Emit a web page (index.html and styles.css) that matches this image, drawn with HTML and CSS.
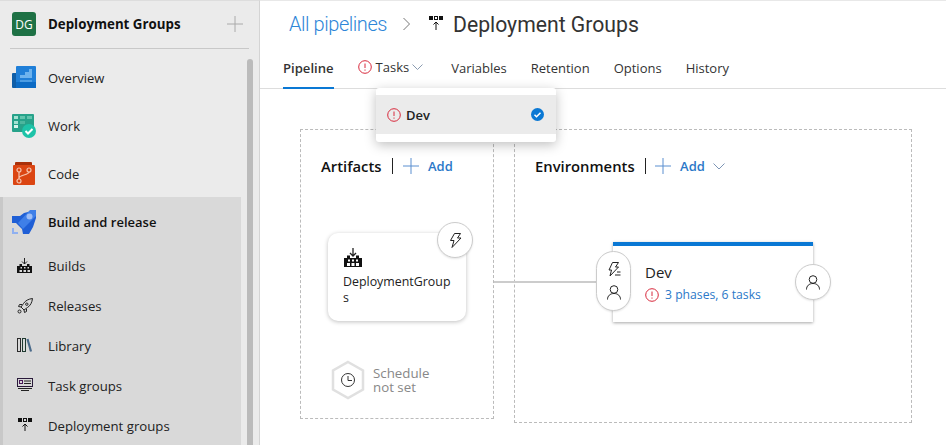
FILE: index.html
```html
<!DOCTYPE html>
<html lang="en">
<head>
  <meta charset="UTF-8" />
  <meta name="viewport" content="width=device-width, initial-scale=1" />
  <title>Deployment Groups - Pipeline</title>
  <link rel="stylesheet" href="styles.css">
</head>
<body>
  <aside class="sidebar">
    <div class="project">
      <span class="project-badge">DG</span>
      <span class="project-name">Deployment Groups</span>
      <svg class="project-add" width="16" height="16" viewBox="0 0 16 16"><path d="M8 0v16M0 8h16" stroke="#aaa" stroke-width="1" fill="none"/></svg>
    </div>

    <nav class="nav">
      <a class="nav-item">
        <svg class="nav-icon" width="24" height="24" viewBox="0 0 24 24">
          <rect x="0" y="7" width="8" height="15" rx="1" fill="#0f5ea8"/>
          <rect x="4" y="0" width="20" height="22" rx="1" fill="#1f7fd8"/>
          <rect x="4" y="16" width="20" height="6" fill="#0c6bc4"/>
          <path d="M8 9h5V6h4V3h3v9H8z" fill="#6db3ee"/>
          <rect x="8" y="14" width="12" height="2" fill="#4c9de3"/>
        </svg>
        <span>Overview</span>
      </a>
      <a class="nav-item">
        <svg class="nav-icon" width="24" height="24" viewBox="0 0 24 24">
          <rect x="0" y="0" width="22" height="18" rx="1" fill="#27a28a"/>
          <rect x="2" y="2" width="4" height="3" fill="#a5e2d2"/>
          <rect x="8" y="2" width="5" height="3" fill="#62c4ad"/>
          <rect x="15" y="2" width="5" height="3" fill="#62c4ad"/>
          <rect x="2" y="7" width="4" height="3" fill="#a5e2d2"/>
          <rect x="8" y="7" width="5" height="3" fill="#4cb69e"/>
          <rect x="2" y="11" width="4" height="3" fill="#d8f4ec"/>
          <circle cx="17" cy="17" r="7" fill="#1dc3a8"/>
          <path d="M13.5 17l2.5 2.5 4.5-4.5" stroke="#fff" stroke-width="2" fill="none"/>
        </svg>
        <span>Work</span>
      </a>
      <a class="nav-item">
        <svg class="nav-icon" width="24" height="24" viewBox="0 0 24 24">
          <rect x="3" y="0" width="17" height="5" rx="1" fill="#a9300a"/>
          <rect x="1" y="3" width="22" height="20" rx="1" fill="#db4512"/>
          <g stroke="#f6c3ad" stroke-width="1.2" fill="none">
            <circle cx="7" cy="8" r="2"/><circle cx="17" cy="8" r="2"/><circle cx="7" cy="19" r="2"/>
            <path d="M7 10v7M17 10c0 3-10 3-10 6"/>
          </g>
        </svg>
        <span>Code</span>
      </a>

      <div class="nav-group">
        <a class="nav-item nav-item-head">
          <svg class="nav-icon" width="24" height="24" viewBox="0 0 24 24">
            <path d="M0 6h8l4-3 12-3v8l-3 9-4 7H11l-1-5-6-6H0z" fill="#1f5fd6"/>
            <path d="M6 13l12-13h6v6L11 19z" fill="#3f7fe8"/>
            <circle cx="17.5" cy="6.500" r="3" fill="#9dbdf6"/>
            <path d="M1 18v5h5" stroke="#8fb0f0" stroke-width="2" fill="none"/>
          </svg>
          <span>Build and release</span>
        </a>
        <a class="nav-item nav-sub">
          <svg class="sub-icon" width="16" height="16" viewBox="0 0 16 16">
            <path d="M7.500 0v6M5 3.500L7.500 6 10 3.500" stroke="#222" fill="none"/>
            <path d="M0 8h2.500V6h2.500v2h5V6h2.500v2H15v7H0z" fill="#111"/>
            <path d="M3.500 9h1.500v1.500H3.500zM7 9h1.500v1.500H7zM10.500 9H12v1.500h-1.500z" fill="#d9d9d9"/>
            <path d="M2.500 12H5v2H2.500zM6.500 12h2.500v2H6.500zM10.500 12H13v2h-2.500z" fill="#d9d9d9"/>
          </svg>
          <span>Builds</span>
        </a>
        <a class="nav-item nav-sub">
          <svg class="sub-icon" width="16" height="16" viewBox="0 0 16 16">
            <g stroke="#222" fill="none">
              <path d="M15.500.5c-4 .5-7 2-9 5L4 9l3 3 3.500-2.500c3-2 4.500-5 5-9z"/>
              <circle cx="9.800" cy="6.200" r="1.200"/>
              <path d="M5 6.500H2.500L1.500 8.500 4 9M9.500 11v2.500l-2 1-.5-2.500"/>
              <circle cx="2.500" cy="13.500" r="1.500"/>
            </g>
          </svg>
          <span>Releases</span>
        </a>
        <a class="nav-item nav-sub">
          <svg class="sub-icon" width="16" height="16" viewBox="0 0 16 16">
            <g fill="none">
              <rect x=".5" y=".5" width="3" height="13" stroke="#2a2a2a"/>
              <rect x="5.500" y=".5" width="3" height="13" stroke="#1f3a30"/>
              <path d="M10.500 1l3.500 12.500" stroke="#4a6a8a" stroke-width="2.200"/>
            </g>
          </svg>
          <span>Library</span>
        </a>
        <a class="nav-item nav-sub">
          <svg class="sub-icon" width="16" height="16" viewBox="0 0 16 16">
            <g stroke="#222" fill="none">
              <rect x=".5" y=".5" width="15" height="8" stroke="#2a1a3a"/>
              <rect x="2.500" y="2.500" width="3" height="3" stroke="#4a1a5a"/>
              <path d="M7 3h7M7 5.500h7M1 10.500h14M4 12.500h8"/>
            </g>
          </svg>
          <span>Task groups</span>
        </a>
        <a class="nav-item nav-sub">
          <svg class="sub-icon" width="16" height="16" viewBox="0 0 16 16">
            <path d="M1 0h4v4H1zM11 0h4v4h-4z" fill="#111"/>
            <rect x="6.500" y=".5" width="3" height="3" fill="none" stroke="#111"/>
            <path d="M8 13V6M5.500 8.500L8 6l2.500 2.500" stroke="#111" fill="none"/>
          </svg>
          <span>Deployment groups</span>
        </a>
      </div>
    </nav>
    <div class="scrollbar"></div>
  </aside>

  <main class="main">
    <header class="crumbs">
      <a class="crumb-link">All pipelines</a>
      <svg class="crumb-sep" width="7" height="14" viewBox="0 0 7 14"><path d="M.5 1l6 6-6 6" stroke="#777" fill="none"/></svg>
      <svg class="crumb-icon" width="16" height="16" viewBox="0 0 16 16">
        <path d="M1 0h4v4H1zM11 0h4v4h-4z" fill="#111"/>
        <rect x="6.500" y=".5" width="3" height="3" fill="none" stroke="#111"/>
        <path d="M8 14V6M5.500 8.500L8 6l2.500 2.500" stroke="#111" fill="none"/>
      </svg>
      <span class="crumb-title">Deployment Groups</span>
    </header>

    <div class="tabs">
      <a class="tab tab-active">Pipeline</a>
      <a class="tab tab-tasks">
        <svg class="alert" width="14" height="14" viewBox="0 0 14 14"><circle cx="7" cy="7" r="6.300" stroke="#d8293c" fill="none"/><path d="M7 3.500v4.500M7 9.500v1.200" stroke="#d8293c" fill="none"/></svg>
        Tasks
        <svg class="chev" width="11" height="6" viewBox="0 0 11 6"><path d="M.5.500l5 5 5-5" stroke="#8a9bb0" fill="none"/></svg>
      </a>
      <a class="tab">Variables</a>
      <a class="tab">Retention</a>
      <a class="tab">Options</a>
      <a class="tab">History</a>
    </div>

    <div class="canvas">
      <section class="lane lane-artifacts">
        <div class="lane-head">
          <h2>Artifacts</h2>
          <a class="lane-add">
            <svg width="16" height="16" viewBox="0 0 16 16"><path d="M8 0v16M0 8h16" stroke="#5b8fd0" fill="none"/></svg>
            Add
          </a>
        </div>
      </section>
      <section class="lane lane-envs">
        <div class="lane-head">
          <h2>Environments</h2>
          <a class="lane-add">
            <svg width="16" height="16" viewBox="0 0 16 16"><path d="M8 0v16M0 8h16" stroke="#5b8fd0" fill="none"/></svg>
            Add
            <svg class="add-chev" width="12" height="7" viewBox="0 0 12 7"><path d="M.5.500l5.500 5.500 5.500-5.500" stroke="#7d95b5" fill="none"/></svg>
          </a>
        </div>
      </section>

      <div class="connector"></div>

      <div class="artifact-card">
        <svg class="artifact-icon" width="18" height="20" viewBox="0 0 18 20">
          <path d="M9 0v8M6 5L9 8 12 5" stroke="#222" stroke-width="1.300" fill="none"/>
          <path d="M0 10h3V7.500h3V10h6V7.500h3V10h3v9H0z" fill="#111"/>
          <path d="M4 11.500h2v2H4zM8 11.500h2v2H8zM12 11.500h2v2h-2zM3 15h3v3H3zM7.500 15h3v3h-3zM12 15h3v3h-3z" fill="#fff"/>
        </svg>
        <div class="artifact-name">DeploymentGroups</div>
      </div>
      <div class="round-btn trigger-btn">
        <svg width="13" height="15" viewBox="0 0 13 15"><path d="M5.500.5h6L8.500 5h3.500L3 14.500l2-7H1.500z" stroke="#222" fill="none"/></svg>
      </div>

      <div class="schedule">
        <svg width="36" height="40" viewBox="0 0 36 40">
          <path d="M18 2l15 8.500v19L18 38 3 29.500v-19z" fill="#fff" stroke="#e0e0e0" stroke-width="2.500"/>
          <circle cx="18" cy="20" r="6.500" fill="none" stroke="#333"/>
          <path d="M18 16v4.500h4" fill="none" stroke="#333"/>
        </svg>
        <div class="schedule-text">
          <span>Schedule</span>
          <span>not set</span>
        </div>
      </div>

      <div class="env-card">
        <div class="env-name">Dev</div>
        <div class="env-status">
          <svg width="14" height="14" viewBox="0 0 14 14"><circle cx="7" cy="7" r="6.300" stroke="#d8293c" fill="none"/><path d="M7 3.500v4.500M7 9.500v1.200" stroke="#d8293c" fill="none"/></svg>
          <a>3 phases, 6 tasks</a>
        </div>
      </div>
      <div class="pre-pill">
        <svg width="14" height="15" viewBox="0 0 14 15"><path d="M5.500.5h6L8.500 5h3L3 14l1.500-6H2zM8 13h5.500M10 10h3.500" stroke="#222" fill="none"/></svg>
        <svg width="14" height="15" viewBox="0 0 14 15"><circle cx="7" cy="4.500" r="3.800" stroke="#222" fill="none"/><path d="M.5 14.500c0-3.500 2.500-6 6.500-6s6.500 2.500 6.500 6" stroke="#222" fill="none"/></svg>
      </div>
      <div class="round-btn post-btn">
        <svg width="14" height="15" viewBox="0 0 14 15"><circle cx="7" cy="4.500" r="3.800" stroke="#222" fill="none"/><path d="M.5 14.500c0-3.500 2.500-6 6.500-6s6.500 2.500 6.500 6" stroke="#222" fill="none"/></svg>
      </div>
    </div>

    <div class="menu">
      <div class="menu-row">
        <svg width="14" height="14" viewBox="0 0 14 14"><circle cx="7" cy="7" r="6.300" stroke="#d8293c" fill="none"/><path d="M7 3.500v4.500M7 9.500v1.200" stroke="#d8293c" fill="none"/></svg>
        <span class="menu-label">Dev</span>
        <svg class="menu-check" width="13" height="13" viewBox="0 0 13 13"><circle cx="6.500" cy="6.500" r="6.500" fill="#0a78d4"/><path d="M3.500 6.800l2 2 4-4" stroke="#fff" stroke-width="1.500" fill="none"/></svg>
      </div>
    </div>
  </main>
</body>
</html>
```

FILE: styles.css
```css
* { box-sizing: border-box; }
html, body { height: 100%; }
body { margin: 0; display: flex; height: 100vh; overflow: hidden; font-family: "Open Sans", "Noto Sans", sans-serif; font-size: 13px; color: #222; background: #fff; }

/* left rail */
.sidebar { position: relative; width: 260px; flex: none; background: #ebebeb; border-top: 1px solid #ddd; border-right: 1px solid #d4d4d4; overflow: hidden; }
.project { display: flex; align-items: center; height: 48px; margin: 0 10px; padding: 0 2px 1px; border-bottom: 1px solid #c8c8c8; }
.project-badge { display: flex; align-items: center; justify-content: center; width: 24px; height: 24px; border-radius: 3px; background: #1e7145; color: #fff; font-size: 12px; }
.project-name { margin-left: 12px; font-weight: 700; font-size: 13.300px; color: #111; }
.project-add { margin-left: auto; margin-right: 4px; }
.nav { padding-top: 5px; }
.nav-item { display: flex; align-items: center; height: 48px; padding-left: 12px; color: #222; }
.nav-icon { flex: none; margin-right: 12px; }
.nav-group { margin-top: -1px; width: 241px; min-height: 260px; background: #d9d9d9; border-left: 3px solid #c8c8c8; }
.nav-group .nav-item { padding-left: 9px; }
.nav-group .nav-item-head { height: 49px; font-weight: 600; color: #111; }
.nav-group .nav-sub { height: 40px; padding-left: 14px; font-size: 13.200px; }
.sub-icon { flex: none; margin-right: 15px; }
.scrollbar { position: absolute; left: 247px; top: 58px; width: 6px; height: 400px; border-radius: 3px; background: #bbb; }

/* pipeline header */
.main { position: relative; flex: 1; min-width: 0; border-top: 1px solid #e8e8e8; }
.crumbs { display: flex; align-items: center; height: 46px; margin-bottom: 1px; padding-left: 29px; font-family: Roboto, "Open Sans", sans-serif; }
.crumb-link { font-size: 20px; font-weight: 300; letter-spacing: -.45px; color: #2e86d8; }
.crumb-sep { margin-left: 16px; }
.crumb-icon { margin-left: 18px; }
.crumb-title { margin-left: 9px; font-size: 21.200px; color: #333; }
.tabs { display: flex; height: 41px; padding-left: 23px; gap: 24px; border-bottom: 1px solid #ddd; font-size: 13px; }
.tab { display: flex; align-items: center; height: 40px; color: #333; }
.tab-active { font-weight: 600; font-size: 13.100px; border-bottom: 2px solid #0a78d4; height: 41px; }
.tab-tasks { gap: 4px; margin-top: -1px; margin-right: 4px; }
.alert { flex: none; }
.chev { margin-left: -1px; }

/* diagram, items sit on a free canvas */
.canvas { position: relative; height: 357px; }
.lane { position: absolute; top: 40px; border: 1px dashed #bbb; }
.lane-artifacts { left: 40px; width: 194px; height: 290px; }
.lane-envs { left: 254px; width: 398px; height: 294px; }
.lane-head { display: flex; align-items: center; height: 20px; margin: 26px 0 0 20px; }
.lane-head h2 { margin: 0; padding-right: 10px; border-right: 1px solid #222; font-size: 14.800px; line-height: 16px; font-weight: 600; color: #111; }
.lane-add { display: flex; align-items: center; gap: 9px; margin-left: 10.500px; color: #2b78c8; font-weight: 600; }
.lane-envs .lane-add { margin-left: 9.500px; }
.add-chev { margin-left: -1px; }
.connector { position: absolute; left: 234px; top: 192px; width: 104px; height: 2px; background: #ccc; }
.artifact-card { position: absolute; left: 68px; top: 144px; width: 138px; height: 88px; padding: 15px; border-radius: 10px; background: #fff; box-shadow: 0 1px 4px rgba(0,0,0,.25); }
.artifact-icon { display: block; margin-left: 1px; }
.artifact-name { width: 109px; margin-top: 6px; font-size: 12.400px; line-height: 16px; word-break: break-all; color: #222; }
.round-btn { position: absolute; display: flex; align-items: center; justify-content: center; width: 36px; height: 36px; border-radius: 50%; background: #fff; border: 1px solid #ccc; box-shadow: 0 1px 2px rgba(0,0,0,.1); }
.trigger-btn { left: 177px; top: 133px; }
.post-btn { left: 535px; top: 175px; }
.schedule { position: absolute; left: 70px; top: 271px; display: flex; align-items: center; gap: 7px; font-size: 13.300px; color: #888; }
.schedule-text span { display: block; height: 14px; line-height: 14px; }
.env-card { position: absolute; left: 353px; top: 153px; width: 200px; height: 80px; padding: 16px 0 0 32px; background: #fff; border-top: 4px solid #0a78d4; box-shadow: 0 1px 3px rgba(0,0,0,.35); }
.env-name { font-size: 15px; line-height: 20px; color: #222; }
.env-status { display: flex; align-items: center; gap: 6px; margin-top: 4px; color: #2b78c8; font-size: 12.200px; }
.pre-pill { position: absolute; left: 336px; top: 162px; display: flex; flex-direction: column; align-items: center; justify-content: center; gap: 8px; width: 35px; height: 60px; border-radius: 18px; background: #fff; border: 1px solid #ccc; box-shadow: 0 1px 2px rgba(0,0,0,.1); }

/* tasks dropdown */
.menu { position: absolute; left: 116px; top: 87px; width: 180px; height: 54px; padding: 7px 0; border-radius: 3px; background: #fff; box-shadow: 0 3px 12px rgba(0,0,0,.25); }
.menu-row { display: flex; align-items: center; height: 39px; padding: 0 12px 0 11px; background: #ebebeb; }
.menu-label { margin-left: 5px; font-weight: 600; color: #222; }
.menu-check { margin-left: auto; }
```
